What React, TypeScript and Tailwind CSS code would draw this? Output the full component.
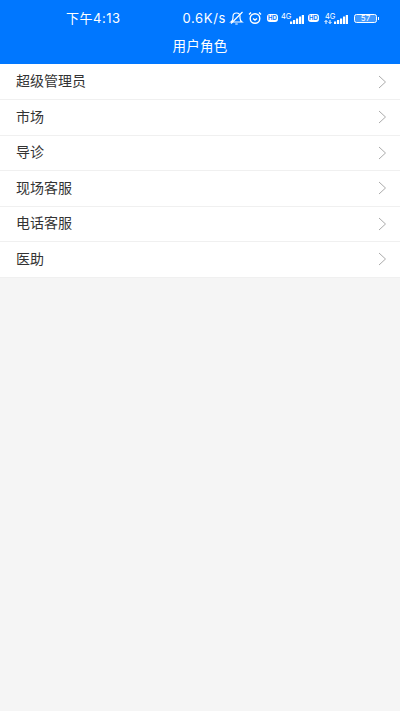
import React from 'react';

const roles = ['超级管理员', '市场', '导诊', '现场客服', '电话客服', '医助'];

const font = "font-['Roboto','Noto_Sans_CJK_SC',sans-serif]";
const statusFont = "font-['Inter','Noto_Sans_CJK_SC',sans-serif]";

const SignalBars = () => (
  <svg width="14" height="9" viewBox="0 0 14 9" fill="#fff">
    <rect x="0" y="6.500" width="2.200" height="2.500" />
    <rect x="3" y="5" width="2.200" height="4" />
    <rect x="6" y="3.500" width="2.200" height="5.500" />
    <rect x="9" y="1.500" width="2.200" height="7.500" />
    <rect x="11.800" y="0" width="2.200" height="9" />
  </svg>
);

const HdBadge = () => (
  <span className="flex h-[8px] w-[11px] items-center justify-center rounded-[3px] bg-white text-[6px] font-bold leading-none text-[#0077ff]">
    HD
  </span>
);

const Signal = ({ arrows }: { arrows?: boolean }) => (
  <span className="relative flex h-[11px] w-[24px] items-end justify-end">
    <span className="absolute left-[1px] top-0 text-[7.5px] leading-[8px] text-white">4G</span>
    {arrows && (
      <svg className="absolute bottom-0 left-0" width="9" height="4" viewBox="0 0 9 4" fill="none" stroke="#fff" strokeWidth="1">
        <path d="M2 4V.5M.5 2L2 .5 3.500 2M6 0v3.500M4.500 2L6 3.500 7.500 2" />
      </svg>
    )}
    <SignalBars />
  </span>
);

const StatusBar = () => (
  <div className={`flex h-[36px] items-center pl-[66px] pr-[21px] text-white ${statusFont}`}>
    <span className="pt-[1px] text-[13px] tracking-[0.5px]">下午4:13</span>
    <span className="ml-auto pt-[1px] text-[13px] tracking-[0.65px]">0.6K/s</span>
    <svg className="ml-[3px]" width="15" height="14" viewBox="0 0 15 14" fill="none" stroke="#fff" strokeWidth="1.200">
      <path d="M2 11h11c-1.400-1-2-2-2-4V5.500C11 3.500 9.500 2 7.500 2S4 3.500 4 5.500V7c0 2-.6 3-2 4z" />
      <path d="M6.300 13h2.400M2 12.500L13.500 1" />
    </svg>
    <svg className="ml-[4px]" width="14" height="14" viewBox="0 0 14 14" fill="none" stroke="#fff" strokeWidth="1.400">
      <circle cx="7" cy="7.500" r="4.800" />
      <path d="M5 7.500l2 1.500 2-1.500M1 3.500L3 1.500M13 3.500L11 1.500" />
    </svg>
    <span className="ml-[5px]"><HdBadge /></span>
    <span className="ml-[2px]"><Signal /></span>
    <span className="ml-[4px]"><HdBadge /></span>
    <span className="ml-[5px]"><Signal arrows /></span>
    <span className="ml-[6px] flex items-center">
      <span className="flex h-[9px] w-[23px] items-center justify-center rounded-[2.5px] border border-white bg-white/25 text-[8px] leading-none text-white">
        57
      </span>
      <span className="ml-[1px] h-[3px] w-[1px] bg-white" />
    </span>
  </div>
);

const App: React.FC = () => {
  return (
    <div className={`flex min-h-[711px] flex-col bg-[#f5f5f5] ${font}`}>
      <div className="h-[64px] bg-[#0077ff]">
        <StatusBar />
        <div className="text-center text-[13.5px] leading-[20px] tracking-[0.3px] text-white">用户角色</div>
      </div>
      <ul className="bg-white pt-[0.5px]">
        {roles.map((role) => (
          <li
            key={role}
            className="flex h-[35.5px] items-center justify-between border-b border-[#f0f0f0] pl-[16px] pr-[13px]"
          >
            <span className="text-[14px] text-[#333333]">{role}</span>
            <svg width="9" height="14" viewBox="0 0 9 14" fill="none" stroke="#ababab" strokeWidth="1">
              <path d="M1 1l6.500 6L1 13" />
            </svg>
          </li>
        ))}
      </ul>
    </div>
  );
};

export default App;
